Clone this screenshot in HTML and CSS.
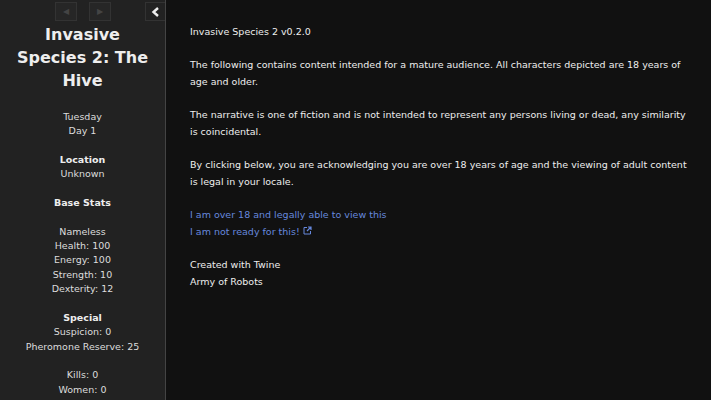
FILE: index.html
```html
<!DOCTYPE html>
<html>

<head>
    <title>Invasive Species 2: The Hive</title>
    <meta charset="utf-8">
    <meta name="viewport" content="width=device-width, initial-scale=1.0">

    <link rel="stylesheet" href="styles.css">
</head>

<body>

    <div class="layout">

        <aside id="ui-bar">
            <div class="ui-bar-tray">
                <div class="history">
                    <button class="hist-btn" disabled>&#9664;</button>
                    <button class="hist-btn" disabled>&#9654;</button>
                </div>
                <button class="toggle">
                    <svg width="9" height="10" viewBox="0 0 9 10">
                        <path d="M7 1 L2.5 5 L7 9" fill="none" stroke="#eee" stroke-width="2.4"/>
                    </svg>
                </button>
            </div>

            <h1 class="story-title">Invasive Species 2: The Hive</h1>

            <div class="caption">
                <p>Tuesday<br>Day 1</p>

                <p><b>Location</b><br>Unknown</p>

                <p><b>Base Stats</b></p>

                <p>Nameless<br>Health: 100<br>Energy: 100<br>Strength: 10<br>Dexterity: 12</p>

                <p><b>Special</b><br>Suspicion: 0<br>Pheromone Reserve: 25</p>

                <p>Kills: 0<br>Women: 0</p>
            </div>
        </aside>

        <main id="passages">
            <div class="passage">
                <p>Invasive Species 2 v0.2.0</p>

                <p>The following contains content intended for a mature audience. All characters depicted are 18 years of age and older.</p>

                <p>The narrative is one of fiction and is not intended to represent any persons living or dead, any similarity is coincidental.</p>

                <p>By clicking below, you are acknowledging you are over 18 years of age and the viewing of adult content is legal in your locale.</p>

                <p>
                    <a href="#" class="link">I am over 18 and legally able to view this</a><br>
                    <a href="#" class="link">I am not ready for this!</a>
                    <svg class="ext" width="9" height="9" viewBox="0 0 9 9">
                        <path d="M4 1.5 H1 V8 H7.5 V5" fill="none" stroke="#68d" stroke-width="1"/>
                        <path d="M5 1 H8 V4 M8 1 L4 5" fill="none" stroke="#68d" stroke-width="1.2"/>
                    </svg>
                </p>

                <p>Created with Twine<br>Army of Robots</p>
            </div>
        </main>

    </div>

</body>

</html>
```

FILE: styles.css
```css
html,
body {
    margin: 0;
    height: 100%;
}

body {
    background-color: #111;
    color: #eee;
    font-family: "DejaVu Sans", sans-serif;
    overflow: hidden;
}

.layout {
    display: flex;
    height: 100%;
}

#ui-bar {
    width: 166px;
    flex-shrink: 0;
    background-color: #222;
    border-right: 1px solid #444;
    text-align: center;
    box-sizing: border-box;
}

.ui-bar-tray {
    display: flex;
    justify-content: flex-end;
    padding: 2px 0 0 0;
    height: 20px;
}

.history {
    display: flex;
    gap: 12px;
    margin-right: 34px;
}

.hist-btn {
    width: 22px;
    height: 19px;
    padding: 0;
    font-size: 8px;
    color: #444;
    background-color: #262626;
    border: 1px solid #333;
}

.toggle {
    width: 20px;
    height: 19px;
    padding: 0;
    background-color: #222;
    border: 1px solid #333;
    border-right: none;
    display: flex;
    align-items: center;
    justify-content: center;
}

.story-title {
    font-size: 16px;
    line-height: 23px;
    font-weight: bold;
    margin: 1px 14px 0 14px;
}

.caption {
    font-size: 9.5px;
    line-height: 14.35px;
    margin-top: 18px;
    color: #ddd;
}

.caption b {
    color: #eee;
}

.caption p {
    margin: 0 0 14.35px 0;
}

#passages {
    flex: 1;
    padding: 23px 20px 0 24px;
}

.passage {
    font-size: 9.5px;
    line-height: 17px;
}

.passage p {
    margin: 0 0 16px 0;
}

.link {
    color: #68d;
    text-decoration: none;
}

.ext {
    vertical-align: middle;
    height: 9px;
    margin-top: -4px;
}
```
